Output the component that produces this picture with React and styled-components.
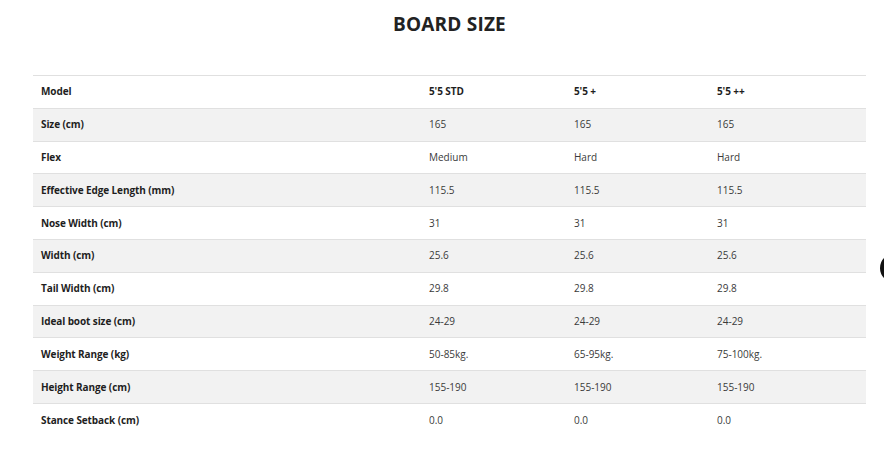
import React from 'react'
import styled, { createGlobalStyle } from 'styled-components'

const GlobalStyle = createGlobalStyle`
    html, body {
        margin:0;
        padding:0;
        background:#fff;
        font-family:"Open Sans", "Liberation Sans", sans-serif;
        color:#222;
    }
`

const columns = ['5\'5 STD', '5\'5 +', '5\'5 ++']

const rows = [
    ['Size (cm)', '165', '165', '165'],
    ['Flex', 'Medium', 'Hard', 'Hard'],
    ['Effective Edge Length (mm)', '115.5', '115.5', '115.5'],
    ['Nose Width (cm)', '31', '31', '31'],
    ['Width (cm)', '25.6', '25.6', '25.6'],
    ['Tail Width (cm)', '29.8', '29.8', '29.8'],
    ['Ideal boot size (cm)', '24-29', '24-29', '24-29'],
    ['Weight Range (kg)', '50-85kg.', '65-95kg.', '75-100kg.'],
    ['Height Range (cm)', '155-190', '155-190', '155-190'],
    ['Stance Setback (cm)', '0.0', '0.0', '0.0'],
]

function App() {
    return (
        <>
            <GlobalStyle />
            <Page>
                <Title>BOARD SIZE</Title>
                <Table>
                    <colgroup>
                        <col style={{ width: 388 }} />
                        <col style={{ width: 145 }} />
                        <col style={{ width: 143 }} />
                        <col />
                    </colgroup>
                    <tbody>
                        <Row>
                            <Label>Model</Label>
                            {columns.map((c) => (
                                <Label key={c}>{c}</Label>
                            ))}
                        </Row>
                        {rows.map((r, i) => (
                            <Row key={r[0]} $striped={i % 2 === 0}>
                                <Label>{r[0]}</Label>
                                {r.slice(1).map((v, j) => (
                                    <Value key={j}>{v}</Value>
                                ))}
                            </Row>
                        ))}
                    </tbody>
                </Table>
            </Page>
            <ChatBubble />
        </>
    )
}

export default App

const Page = styled.div`
    width:833px;
    margin-left:33px;
    padding-top:9px;
`

const Title = styled.h2`
    margin:0;
    text-align:center;
    font-size:19px;
    line-height:30px;
    font-weight:700;
    color:#222;
    letter-spacing:0.2px;
`

const Table = styled.table`
    width:100%;
    margin-top:36px;
    border-collapse:collapse;
    table-layout:fixed;
`

const Row = styled.tr`
    height:32.8px;
    background:${(p) => (p.$striped ? '#f2f2f2' : '#fff')};
    border-top:1px solid #e0e0e0;
`

const Label = styled.td`
    padding:0 8px 1px;
    font-size:10px;
    font-weight:700;
    letter-spacing:-0.1px;
    color:#1e1e1e;
    white-space:nowrap;
`

const Value = styled.td`
    padding:0 8px 1px;
    font-size:10px;
    font-weight:400;
    color:#3a3a3a;
    white-space:nowrap;
`

const ChatBubble = styled.div`
    position:fixed;
    left:880px;
    top:253px;
    width:30px;
    height:30px;
    border-radius:50%;
    background:#111;
`
